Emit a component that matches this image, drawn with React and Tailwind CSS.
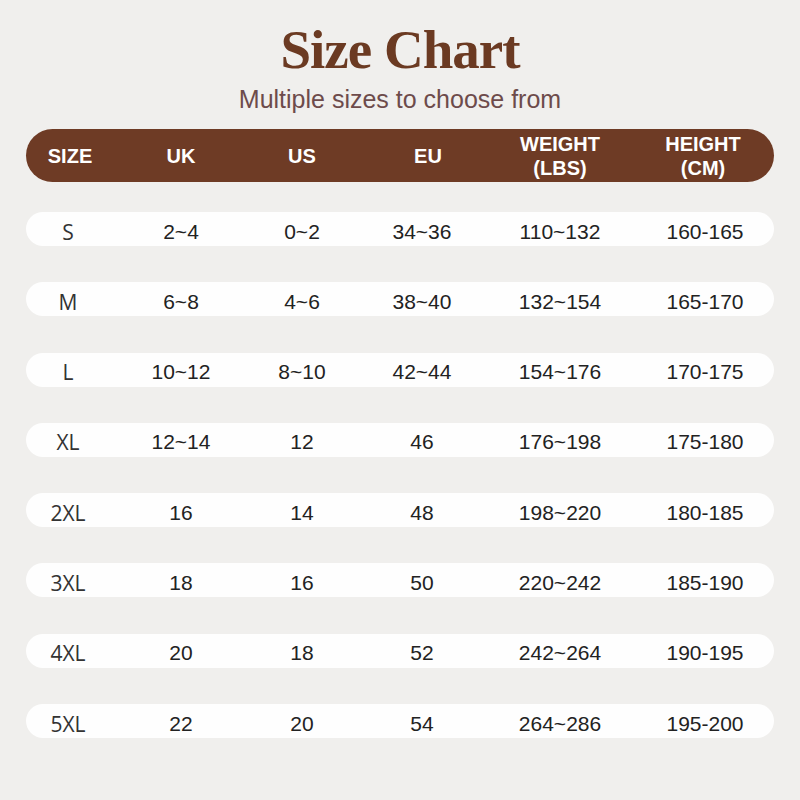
export default function App() {
  const rows = [
    ["S", "2~4", "0~2", "34~36", "110~132", "160-165"],
    ["M", "6~8", "4~6", "38~40", "132~154", "165-170"],
    ["L", "10~12", "8~10", "42~44", "154~176", "170-175"],
    ["XL", "12~14", "12", "46", "176~198", "175-180"],
    ["2XL", "16", "14", "48", "198~220", "180-185"],
    ["3XL", "18", "16", "50", "220~242", "185-190"],
    ["4XL", "20", "18", "52", "242~264", "190-195"],
    ["5XL", "22", "20", "54", "264~286", "195-200"],
  ];
  const grid = "grid grid-cols-[84px_142px_100px_144px_128px_1fr] items-center";
  return (
    <div className="w-[800px] h-[800px] bg-[#f0efed] overflow-hidden">
      <div className="flex flex-col items-center pt-[22px]">
        <div
          className="h-[56px] leading-[56px] text-[55px] font-bold text-[#6b3a22] tracking-[-1px]"
          style={{ fontFamily: '"Liberation Serif", "DejaVu Serif", serif' }}
        >
          Size Chart
        </div>
        <div
          className="mt-[6px] h-[30px] leading-[30px] text-[25px] text-[#6d4b4b]"
          style={{ fontFamily: '"Liberation Sans", Arial, sans-serif' }}
        >
          Multiple sizes to choose from
        </div>
      </div>
      <div className="mx-[26px] mt-[15px]" style={{ fontFamily: '"Liberation Sans", Arial, sans-serif' }}>
        <div className={`${grid} h-[53px] rounded-full bg-[#6e3b25] text-white font-bold text-[20px] leading-[24px] text-center`}>
          <div className="pl-[4px]">SIZE</div>
          <div>UK</div>
          <div>US</div>
          <div className="pl-[8px]">EU</div>
          <div>WEIGHT<br />(LBS)</div>
          <div className="pl-[8px]">HEIGHT<br />(CM)</div>
        </div>
        <div className="flex flex-col gap-[36.3px] mt-[30px]">
          {rows.map((r) => (
            <div key={r[0]} className={`${grid} h-[34px] pt-[5px] rounded-full bg-[#fefefe] text-[21px] leading-[24px] text-[#222] text-center`}>
              <div className="text-[#333] text-[21px]" style={{ fontFamily: '"Open Sans", sans-serif' }}>{r[0]}</div>
              <div>{r[1]}</div>
              <div>{r[2]}</div>
              <div className="pr-[4px]">{r[3]}</div>
              <div>{r[4]}</div>
              <div className="pl-[12px]">{r[5]}</div>
            </div>
          ))}
        </div>
      </div>
    </div>
  );
}
